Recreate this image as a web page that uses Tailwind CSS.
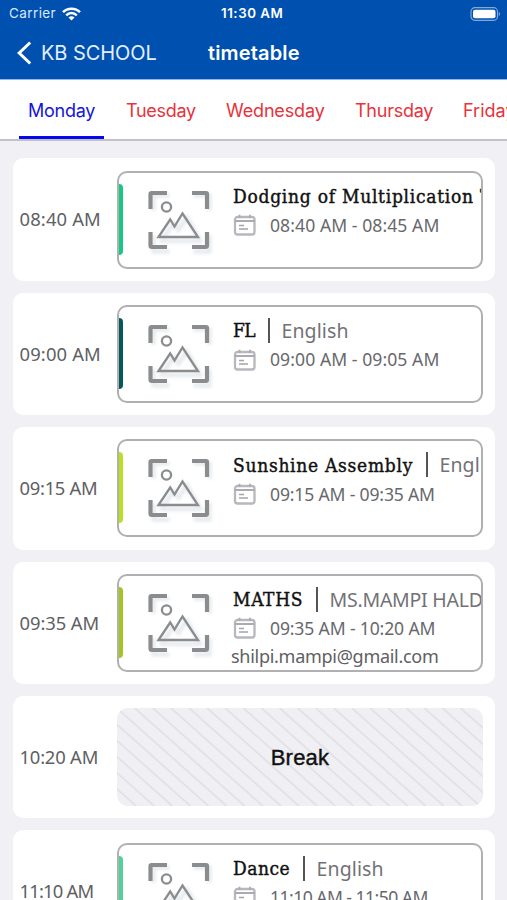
<!DOCTYPE html>
<html lang="en">
<head>
<meta charset="utf-8">
<title>timetable</title>
<script src="https://cdn.jsdelivr.net/npm/@tailwindcss/browser@4"></script>
</head>
<body class="w-[507px] h-[900px] overflow-hidden bg-[#f0f0f5] font-['Noto_Sans',sans-serif]">
<svg class="hidden">
  <symbol id="photo" viewBox="0 0 72 72">
    <g fill="none" stroke-linecap="butt" stroke-linejoin="round">
      <g stroke="#e9edf0" stroke-width="5" transform="translate(3.500 4)" style="filter:blur(1.500px)">
        <path d="M6 22V6.500H22M46 6.500H62V22M62 46V62.500H46M22 62.500H6V46M14 52l12-18 5 7 8-13 14 24z"/>
      </g>
      <g stroke="#8b8c8e" stroke-width="4.200">
        <path d="M6.500 24V9Q6.500 8 7.500 8H23M48 8H62Q63 8 63 9V24"/>
        <path d="M6.500 47V60.500Q6.500 62 8 62H23M48 62H61.500Q63 62 63 60.500V47"/>
      </g>
      <g stroke="#8b8c8e" stroke-width="2.300" stroke-linejoin="miter">
        <circle cx="22.500" cy="22" r="4.600"/>
        <path d="M14.500 52L26.200 34.500 30.500 41.500 38.500 28.500 54 52Z"/>
      </g>
    </g>
  </symbol>
  <symbol id="cal" viewBox="0 0 24 22">
    <rect x="2" y="3" width="19.500" height="17.500" rx="2.500" fill="none" stroke="#b7b7bd" stroke-width="2.300"/>
    <path d="M2 7H21.500" stroke="#aaaab0" stroke-width="1.800"/>
    <path d="M6.500 .8V4M17 .8V4" stroke="#aaaab0" stroke-width="1.800"/>
    <path d="M6 11.500h5M6 15h9" stroke="#a4a4aa" stroke-width="1.500"/>
  </symbol>
</svg>
<header class="h-[79px] bg-[#0050b0] text-white font-[Inter,sans-serif]">
  <div class="relative h-[27px] flex items-center justify-between pl-[9px] pr-[6px] text-[13.500px]">
    <div class="flex items-center gap-[6px] text-[#d9e8fa]"><span class="tracking-[0.400px]">Carrier</span>
      <svg class="w-[19px] h-[14px]" viewBox="0 0 19 14" fill="none" stroke="#fff" stroke-width="2.500"><path d="M1 5.200C5.500.5 13.500.5 18 5.200M4.200 8.300c3-3 7.600-3 10.600 0"/><path d="M9.500 13.500L6.500 10.500c1.800-1.600 4.200-1.600 6 0z" fill="#fff" stroke="none"/></svg>
    </div>
    <span class="absolute left-[221px] top-[4px] font-semibold text-[13.300px] tracking-[0.550px]">11:30 AM</span>
    <svg class="w-[31px] h-[14px]" viewBox="0 0 31 14"><rect x="1" y=".7" width="26.500" height="12.600" rx="3.800" fill="none" stroke="#7fa8db" stroke-width="1.200"/><rect x="3" y="2.700" width="22.500" height="8.600" rx="2" fill="#fff"/><path d="M28.800 5v4c1.700-.8 1.700-3.200 0-4z" fill="#7fa8db"/></svg>
  </div>
  <div class="relative h-[51px] flex items-center pl-[17px]">
    <svg class="w-[15px] h-[24px]" viewBox="0 0 15 24" fill="none" stroke="#fff" stroke-width="3"><path d="M13.200 1.500L2.200 12l11 10.500"/></svg>
    <span class="ml-[9px] text-[20px] tracking-[-0.080px] text-[#e4effc]">KB SCHOOL</span>
    <span class="absolute left-[208px] text-[20px] font-semibold tracking-[0.150px]">timetable</span>
  </div>
</header>
<nav class="h-[62px] flex bg-white border-t border-[#8db7e6] border-b-2 border-b-[#c3c3c7] pl-[19px] text-[18px] text-[#e8323c] font-[Inter,sans-serif] whitespace-nowrap overflow-hidden">
  <span class="w-[85px] shrink-0 h-[60px] pl-[9px] border-b-4 border-[#0707ee] text-[#1414dc] leading-[61px] tracking-[-0.250px]">Monday</span>
  <span class="w-[101px] shrink-0 pl-[22px] leading-[61px] tracking-[-0.300px]">Tuesday</span>
  <span class="w-[128px] shrink-0 pl-[21px] leading-[61px] tracking-[-0.150px]">Wednesday</span>
  <span class="w-[109px] shrink-0 pl-[22px] leading-[61px] tracking-[-0.250px]">Thursday</span>
  <span class="shrink-0 pl-[21px] leading-[61px]">Friday</span>
</nav>
<main id="list" class="pt-[17.400px] pl-[13px] flex flex-col gap-[12px]"></main>
<script>
const rows = [
  {t:'08:40 AM', k:'tracking-[0.150px]', c:'#14c981', s:'Dodging of Multiplication Tables', w:'tracking-[0.740px]', r:'08:40 AM - 08:45 AM', q:'tracking-[0.060px]'},
  {t:'09:00 AM', k:'tracking-[0.150px]', c:'#07585b', s:'FL', w:'tracking-[-0.600px]', sub:'English', r:'09:00 AM - 09:05 AM', q:'tracking-[0.060px]'},
  {t:'09:15 AM', k:'tracking-[-0.280px]', c:'#b9e01c', s:'Sunshine Assembly', w:'tracking-[0.720px]', sub:'English', r:'09:15 AM - 09:35 AM', q:'tracking-[-0.180px]'},
  {t:'09:35 AM', k:'tracking-[-0.080px]', c:'#a5c41e', s:'MATHS', w:'tracking-[0.650px]', sub:'MS.MAMPI HALDER', m:'tracking-[-0.250px]', r:'09:35 AM - 10:20 AM', q:'tracking-[-0.160px]', e:'shilpi.mampi@gmail.com'},
  {t:'10:20 AM', k:'tracking-[-0.200px]', brk:true},
  {t:'11:10 AM', k:'tracking-[-0.800px]', c:'#4fd39a', s:'Dance', w:'tracking-[0.500px]', sub:'English', r:'11:10 AM - 11:50 AM', q:'tracking-[-0.550px]'}
];
document.getElementById('list').innerHTML = rows.map(r => `
<section class="w-[482px] h-[122.400px] shrink-0 rounded-[10px] bg-white flex pt-[12.300px]">
  <div class="w-[104px] h-[97px] shrink-0 pl-[6.500px] flex items-center text-[18.400px] text-[#606064] whitespace-nowrap ${r.k}">${r.t}</div>
  ${r.brk ? `<div class="w-[366px] h-[98px] rounded-[11px] bg-[#efeff4] overflow-hidden relative flex items-center justify-center">
    <svg class="absolute inset-0 w-full h-full" viewBox="0 0 366 98"><g stroke="#e2e2e6" stroke-width="1.800">${Array.from({length:28},(_,i)=>`<path d="M${i*18.1-109} 0l110 98"/>`).join('')}</g></svg>
    <span class="relative font-['Liberation_Sans',sans-serif] text-[22px] text-[#111] tracking-[0.200px] [-webkit-text-stroke:0.400px_#111]">Break</span></div>`
  : `<div class="w-[366px] h-[98px] rounded-[10px] border-2 border-[#b0b0b3] overflow-hidden flex">
    <i class="block w-[5px] h-[71px] mt-[11px] -ml-px rounded-r-[4px] shrink-0" style="background:${r.c}"></i>
    <svg class="w-[72px] h-[72px] shrink-0 ml-[21px] mt-[12px]"><use href="#photo"/></svg>
    <div class="ml-[17px] pt-[8px] whitespace-nowrap">
      <div class="h-[31px] flex items-center">
        <span class="font-['DejaVu_Serif_Condensed','DejaVu_Serif',serif] [font-stretch:condensed] text-[19px] text-[#111] [-webkit-text-stroke:0.400px_#111] ${r.w}">${r.s}</span>
        ${r.sub ? `<i class="block w-[2px] h-[25px] ml-[12.500px] mr-[12px] bg-[#555]"></i><span class="text-[19.500px] text-[#727276] ${r.m || 'tracking-[0.100px]'}">${r.sub}</span>` : ''}
      </div>
      <div class="h-[27px] flex items-center"><svg class="w-[24px] h-[22px] mr-[13px]"><use href="#cal"/></svg><span class="text-[17.600px] text-[#68686c] ${r.q}">${r.r}</span></div>
      ${r.e ? `<div class="h-[26px] overflow-hidden -ml-[2px] text-[18px] leading-[28px] text-[#606064] tracking-[-0.280px]">${r.e}</div>` : ''}
    </div></div>`}
</section>`).join('');
</script>
</body>
</html>
